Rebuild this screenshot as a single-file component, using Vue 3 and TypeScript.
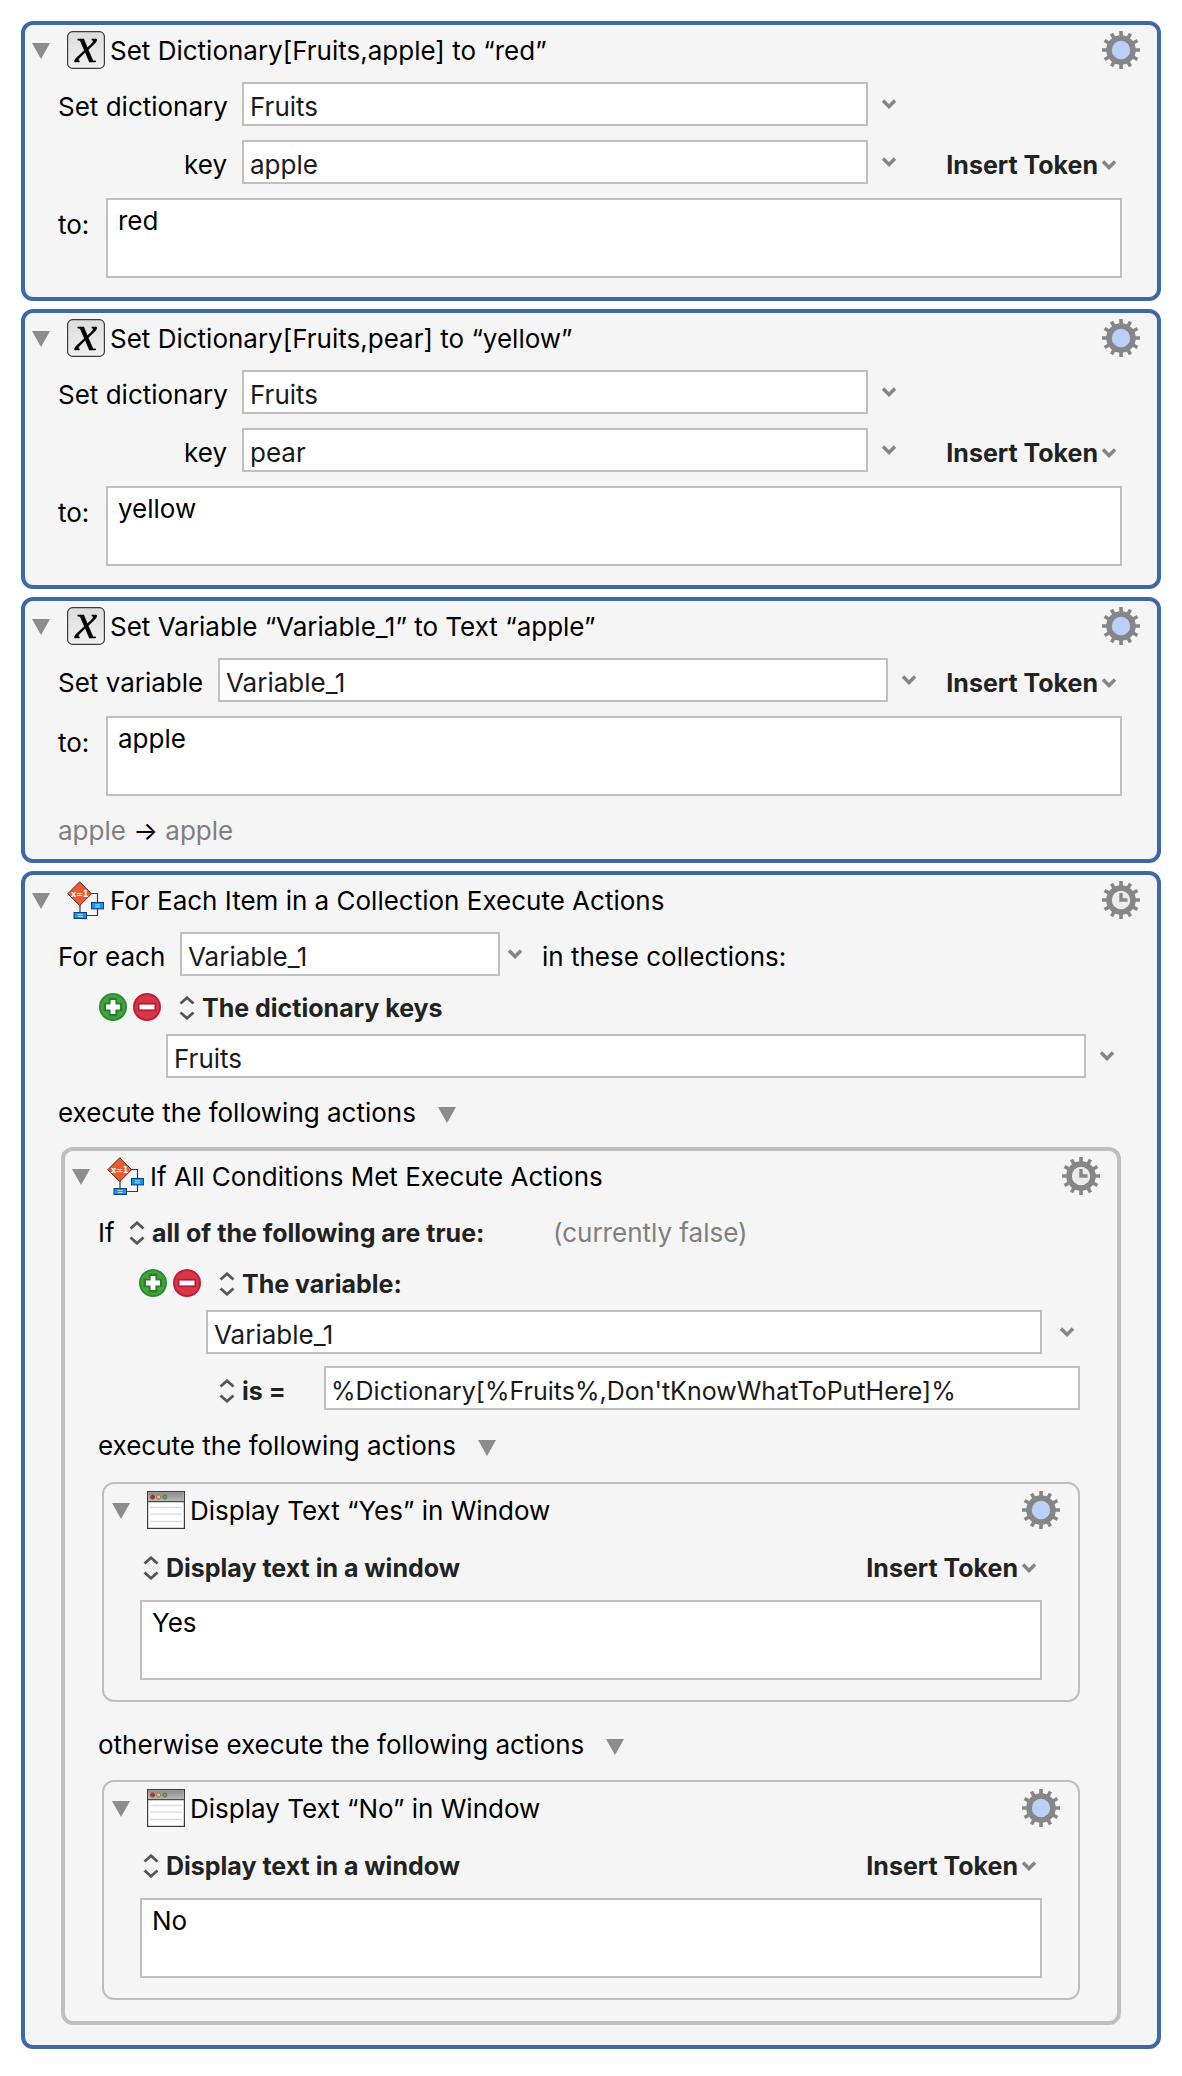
<script setup lang="ts">
import { ref } from 'vue'

interface DictionaryAction {
  id: string
  title: string
  dictionary: string
  key: string
  value: string
}

interface DisplayAction {
  id: string
  caption: string
  title: string
  text: string
}

const dictionaryActions = ref<DictionaryAction[]>([
  { id: 'dict-apple', title: 'Set Dictionary[Fruits,apple] to “red”', dictionary: 'Fruits', key: 'apple', value: 'red' },
  { id: 'dict-pear', title: 'Set Dictionary[Fruits,pear] to “yellow”', dictionary: 'Fruits', key: 'pear', value: 'yellow' },
])

const displayActions = ref<DisplayAction[]>([
  { id: 'show-yes', caption: 'execute the following actions', title: 'Display Text “Yes” in Window', text: 'Yes' },
  { id: 'show-no', caption: 'otherwise execute the following actions', title: 'Display Text “No” in Window', text: 'No' },
])

const variableName = ref('Variable_1')
const variableText = ref('apple')
const loopVariable = ref('Variable_1')
const loopDictionary = ref('Fruits')
const conditionVariable = ref('Variable_1')
const conditionValue = ref("%Dictionary[%Fruits%,Don'tKnowWhatToPutHere]%")

const gearTeeth = [0, 30, 60, 90, 120, 150]
</script>

<template>
  <svg class="sprite" aria-hidden="true">
    <defs>
      <linearGradient id="tile" x1="0" y1="0" x2="0" y2="1">
        <stop offset="0" stop-color="#dcdcdc" />
        <stop offset="1" stop-color="#f0f0f0" />
      </linearGradient>
      <linearGradient id="titlebar" x1="0" y1="0" x2="0" y2="1">
        <stop offset="0" stop-color="#8a8a8a" />
        <stop offset="1" stop-color="#b8b8b8" />
      </linearGradient>
      <symbol id="triangle" viewBox="0 0 18 16">
        <path d="M0 0H18L9 16Z" fill="#8c8c8c" />
      </symbol>
      <symbol id="chevron" viewBox="0 0 14 10">
        <path d="M1 1.5L7 7.5L13 1.5" fill="none" stroke="#868686" stroke-width="3.4" />
      </symbol>
      <symbol id="updown" viewBox="0 0 16 24">
        <path d="M1.5 7.5L8 1.8L14.5 7.5M1.5 16.5L8 22.2L14.5 16.5" fill="none" stroke="#565656" stroke-width="2.8" />
      </symbol>
      <symbol id="variable" viewBox="0 0 38 38">
        <rect x="0.6" y="0.6" width="36.8" height="36.8" rx="5" fill="url(#tile)" stroke="#3c3c3c" stroke-width="1.2" />
        <text x="19" y="31" text-anchor="middle" font-family="Liberation Serif, serif" font-style="italic" font-size="50" stroke="#000" stroke-width="0.4">x</text>
      </symbol>
      <symbol id="flow" viewBox="0 0 38 38">
        <path d="M24 12.5H30.5V22M13 24V32M30.5 27V34.5H20" fill="none" stroke="#3a3a3a" stroke-width="1.2" />
        <path d="M12.7 0.8L24.6 12.7L12.7 24.6L0.8 12.7Z" fill="#ee5a30" stroke="#5a2a1c" stroke-width="1" />
        <text x="12.7" y="15.8" text-anchor="middle" font-family="DejaVu Sans, sans-serif" font-weight="bold" font-size="8" fill="#fff">x=1</text>
        <rect x="24.5" y="21.5" width="12" height="6.4" fill="#0a95ff" stroke="#12406e" />
        <rect x="7" y="31.5" width="12.5" height="6" fill="#0a95ff" stroke="#12406e" />
        <path d="M28 23.8H33M28 25.8H33M10.7 33.6H15.7M10.7 35.5H15.7" stroke="#a9dcff" stroke-width="1" />
      </symbol>
      <symbol id="window" viewBox="0 0 38 38">
        <rect x="0.6" y="0.6" width="36.8" height="36.8" fill="#fff" stroke="#3c3c3c" stroke-width="1.2" />
        <rect x="1.2" y="1.2" width="35.6" height="9" fill="url(#titlebar)" />
        <path d="M0.6 10.6H37.4" stroke="#4a4a4a" stroke-width="1.2" />
        <circle cx="5.6" cy="6" r="2.1" fill="#cf1f2f" stroke="#7a4a4a" stroke-width="0.8" />
        <circle cx="11.7" cy="6" r="2.1" fill="#f7bd74" stroke="#86694a" stroke-width="0.8" />
        <circle cx="17.8" cy="6" r="2.1" fill="#4fb243" stroke="#4a6e46" stroke-width="0.8" />
        <path d="M3 16.5H35M3 23.2H35M3 30.5H35" stroke="#dcdcdc" stroke-width="1.3" />
      </symbol>
      <symbol id="gear" viewBox="0 0 38 38">
        <path v-for="angle in gearTeeth" :key="angle" d="M19 0V38" stroke="#868686" stroke-width="3.6" :transform="`rotate(${angle} 19 19)`" />
        <circle cx="19" cy="19" r="14.8" fill="#868686" />
      </symbol>
      <symbol id="gear-idle" viewBox="0 0 38 38">
        <use href="#gear" />
        <circle cx="19" cy="19" r="9.2" fill="#b9d0f7" />
      </symbol>
      <symbol id="gear-timed" viewBox="0 0 38 38">
        <use href="#gear" />
        <circle cx="19" cy="19" r="9.2" fill="#ececec" />
        <path d="M19 12V19H25.5" fill="none" stroke="#868686" stroke-width="3.4" />
      </symbol>
      <symbol id="plus" viewBox="0 0 28 28">
        <circle cx="14" cy="14" r="13" fill="#49a338" stroke="#2c8c33" stroke-width="2" />
        <path d="M14 4.6V23.4M4.6 14H23.4" stroke="#24812c" stroke-width="8.6" />
        <path d="M14 7V21M7 14H21" stroke="#fff" stroke-width="4.8" />
      </symbol>
      <symbol id="minus" viewBox="0 0 28 28">
        <circle cx="14" cy="14" r="13" fill="#d43a44" stroke="#c41c3e" stroke-width="2" />
        <path d="M4.8 14H23.2" stroke="#bd1738" stroke-width="8.4" />
        <path d="M6.5 14H21.5" stroke="#fff" stroke-width="4.8" />
      </symbol>
    </defs>
  </svg>

  <main class="macro">
    <section v-for="action in dictionaryActions" :key="action.id" class="card">
      <header class="head">
        <button class="icon-button" type="button" aria-label="Collapse"><svg class="triangle"><use href="#triangle" /></svg></button>
        <svg class="badge"><use href="#variable" /></svg>
        <h2 class="title">{{ action.title }}</h2>
        <button class="icon-button" type="button" aria-label="Action options"><svg class="gear"><use href="#gear-idle" /></svg></button>
      </header>
      <div class="body">
        <div class="row">
          <label class="label wide" :for="`${action.id}-name`">Set dictionary</label>
          <input :id="`${action.id}-name`" v-model="action.dictionary" class="field" type="text">
          <button class="icon-button menu" type="button" aria-label="Choose dictionary"><svg class="chevron"><use href="#chevron" /></svg></button>
          <span class="token-space far"></span>
        </div>
        <div class="row next">
          <label class="label wide" :for="`${action.id}-key`">key</label>
          <input :id="`${action.id}-key`" v-model="action.key" class="field" type="text">
          <button class="icon-button menu" type="button" aria-label="Choose key"><svg class="chevron"><use href="#chevron" /></svg></button>
          <div class="token-space far">
            <button class="token" type="button">Insert Token<svg class="chevron"><use href="#chevron" /></svg></button>
          </div>
        </div>
        <div class="value">
          <label class="to" :for="`${action.id}-value`">to:</label>
          <textarea :id="`${action.id}-value`" v-model="action.value" class="area"></textarea>
        </div>
      </div>
    </section>

    <section class="card with-result">
      <header class="head">
        <button class="icon-button" type="button" aria-label="Collapse"><svg class="triangle"><use href="#triangle" /></svg></button>
        <svg class="badge"><use href="#variable" /></svg>
        <h2 class="title">Set Variable “Variable_1” to Text “apple”</h2>
        <button class="icon-button" type="button" aria-label="Action options"><svg class="gear"><use href="#gear-idle" /></svg></button>
      </header>
      <div class="body">
        <div class="row">
          <label class="label medium" for="variable-name">Set variable</label>
          <input id="variable-name" v-model="variableName" class="field" type="text">
          <button class="icon-button menu" type="button" aria-label="Choose variable"><svg class="chevron"><use href="#chevron" /></svg></button>
          <div class="token-space">
            <button class="token" type="button">Insert Token<svg class="chevron"><use href="#chevron" /></svg></button>
          </div>
        </div>
        <div class="value">
          <label class="to" for="variable-text">to:</label>
          <textarea id="variable-text" v-model="variableText" class="area"></textarea>
        </div>
        <p class="result">apple <span class="arrow">→</span> apple</p>
      </div>
    </section>

    <section class="card outer">
      <header class="head">
        <button class="icon-button" type="button" aria-label="Collapse"><svg class="triangle"><use href="#triangle" /></svg></button>
        <svg class="badge"><use href="#flow" /></svg>
        <h2 class="title">For Each Item in a Collection Execute Actions</h2>
        <button class="icon-button" type="button" aria-label="Action options"><svg class="gear"><use href="#gear-timed" /></svg></button>
      </header>
      <div class="body">
        <div class="row">
          <label class="label short" for="loop-variable">For each</label>
          <input id="loop-variable" v-model="loopVariable" class="field small" type="text">
          <button class="icon-button menu near" type="button" aria-label="Choose variable"><svg class="chevron"><use href="#chevron" /></svg></button>
          <span class="label after">in these collections:</span>
        </div>
        <div class="clause">
          <button class="icon-button" type="button" aria-label="Add collection"><svg class="round"><use href="#plus" /></svg></button>
          <button class="icon-button" type="button" aria-label="Remove collection"><svg class="round"><use href="#minus" /></svg></button>
          <div class="popup">
            <svg class="updown"><use href="#updown" /></svg>
            <select aria-label="Collection type"><option>The dictionary keys</option></select>
          </div>
        </div>
        <div class="row indent">
          <input v-model="loopDictionary" class="field" type="text" aria-label="Dictionary">
          <button class="icon-button menu" type="button" aria-label="Choose dictionary"><svg class="chevron"><use href="#chevron" /></svg></button>
        </div>
        <div class="caption">
          execute the following actions
          <button class="icon-button" type="button" aria-label="Hide actions"><svg class="triangle"><use href="#triangle" /></svg></button>
        </div>

        <section class="card nested">
          <header class="head">
            <button class="icon-button" type="button" aria-label="Collapse"><svg class="triangle"><use href="#triangle" /></svg></button>
            <svg class="badge"><use href="#flow" /></svg>
            <h3 class="title">If All Conditions Met Execute Actions</h3>
            <button class="icon-button" type="button" aria-label="Action options"><svg class="gear"><use href="#gear-timed" /></svg></button>
          </header>
          <div class="body">
            <div class="row">
              <label class="label if" for="match-kind">If</label>
              <div class="popup low">
                <svg class="updown"><use href="#updown" /></svg>
                <select id="match-kind"><option>all of the following are true:</option></select>
              </div>
              <span class="label state">(currently false)</span>
            </div>
            <div class="clause">
              <button class="icon-button" type="button" aria-label="Add condition"><svg class="round"><use href="#plus" /></svg></button>
              <button class="icon-button" type="button" aria-label="Remove condition"><svg class="round"><use href="#minus" /></svg></button>
              <div class="popup">
                <svg class="updown"><use href="#updown" /></svg>
                <select aria-label="Condition type"><option>The variable:</option></select>
              </div>
            </div>
            <div class="row indent">
              <input v-model="conditionVariable" class="field" type="text" aria-label="Variable">
              <button class="icon-button menu roomy" type="button" aria-label="Choose variable"><svg class="chevron"><use href="#chevron" /></svg></button>
            </div>
            <div class="row compare">
              <div class="popup low operator">
                <svg class="updown"><use href="#updown" /></svg>
                <select aria-label="Comparison"><option>is =</option></select>
              </div>
              <input v-model="conditionValue" class="field expression" type="text" aria-label="Comparison value">
            </div>

            <template v-for="action in displayActions" :key="action.id">
              <div class="caption">
                {{ action.caption }}
                <button class="icon-button" type="button" aria-label="Hide actions"><svg class="triangle"><use href="#triangle" /></svg></button>
              </div>
              <section class="card thin">
                <header class="head">
                  <button class="icon-button" type="button" aria-label="Collapse"><svg class="triangle"><use href="#triangle" /></svg></button>
                  <svg class="badge"><use href="#window" /></svg>
                  <h4 class="title">{{ action.title }}</h4>
                  <button class="icon-button" type="button" aria-label="Action options"><svg class="gear"><use href="#gear-idle" /></svg></button>
                </header>
                <div class="body">
                  <div class="display">
                    <div class="popup">
                      <svg class="updown"><use href="#updown" /></svg>
                      <select aria-label="Display mode"><option>Display text in a window</option></select>
                    </div>
                    <button class="token" type="button">Insert Token<svg class="chevron"><use href="#chevron" /></svg></button>
                  </div>
                  <textarea v-model="action.text" class="area" aria-label="Text to display"></textarea>
                </div>
              </section>
            </template>
          </div>
        </section>
      </div>
    </section>
  </main>
</template>

<style>
body {
  margin: 0;
  background: #fff;
}
</style>

<style scoped>
* {
  box-sizing: border-box;
}

.sprite {
  position: absolute;
  width: 0;
  height: 0;
}

.macro {
  display: flex;
  flex-direction: column;
  gap: 8px;
  padding: 21px 21px 27px;
  color: #000;
  font: 26px/32px Inter, "Liberation Sans", sans-serif;
}

.card {
  padding-bottom: 19px;
  border: 4px solid #3d68a5;
  border-radius: 12px;
  background: #f5f5f5;
}

.with-result {
  padding-bottom: 12px;
}

.outer {
  padding-bottom: 20px;
}

.nested {
  margin: 0 1px 0 3px;
  padding-bottom: 21px;
  border-color: #bfbfbf;
}

.thin {
  margin: 0 2px 0 4px;
  padding-bottom: 20px;
  border: 2px solid #bfbfbf;
}

.head {
  display: flex;
  align-items: center;
  height: 50px;
  margin-bottom: 7px;
  padding: 0 17px 0 7px;
}

.thin > .head {
  height: 52px;
  margin-bottom: 0;
  padding: 0 18px 0 8px;
}

.title {
  flex: 1;
  margin: 0;
  padding: 1px 0 0 5px;
  font: inherit;
}

.badge {
  width: 38px;
  height: 38px;
  margin-left: 17px;
}

.icon-button {
  display: flex;
  flex: none;
  padding: 0;
  border: 0;
  background: none;
}

.triangle {
  width: 18px;
  height: 16px;
}

.head .triangle {
  margin-top: 2px;
}

.gear {
  width: 38px;
  height: 38px;
}

.round {
  width: 28px;
  height: 28px;
}

.chevron {
  flex: none;
  width: 14px;
  height: 10px;
}

.updown {
  flex: none;
  width: 16px;
  height: 24px;
}

.body {
  padding: 0 35px 0 33px;
}

.thin > .body {
  padding: 0 36px;
}

.row {
  display: flex;
  align-items: center;
  height: 44px;
}

.next {
  margin-top: 14px;
}

.label {
  flex: none;
  padding-top: 5px;
  white-space: nowrap;
}

.wide {
  width: 184px;
  padding-right: 15px;
  text-align: right;
}

.medium {
  width: 160px;
}

.short {
  width: 122px;
}

.if {
  width: 31px;
}

.after {
  padding-left: 20px;
}

.state {
  padding-left: 68px;
  color: #7f7f7f;
}

.field {
  flex: 1;
  min-width: 0;
  height: 44px;
  padding: 5px 6px 0;
  border: 2px solid #bfbfbf;
  border-radius: 0;
  outline: 0;
  background: #fff;
  color: #1a1a1a;
  font: inherit;
}

.expression {
  padding-left: 5px;
  font-size: 25px;
}

.small {
  flex: 0 0 320px;
}

.menu {
  margin-left: 14px;
}

.near {
  margin-left: 8px;
}

.roomy {
  margin-left: 18px;
}

.token-space {
  display: flex;
  flex: none;
  justify-content: flex-end;
  width: 206px;
  padding: 6px 6px 0 0;
}

.far {
  width: 226px;
}

.token {
  display: flex;
  align-items: center;
  gap: 4px;
  padding: 0;
  border: 0;
  background: none;
  color: #222;
  font: bold 25px/32px Inter, "Liberation Sans", sans-serif;
  white-space: nowrap;
}

.value {
  display: flex;
  margin-top: 14px;
}

.to {
  flex: none;
  width: 48px;
  padding-top: 11px;
}

.area {
  display: block;
  flex: 1;
  width: 100%;
  min-width: 0;
  height: 80px;
  padding: 5px 10px;
  border: 2px solid #bfbfbf;
  border-radius: 0;
  outline: 0;
  background: #fff;
  color: #000;
  font: inherit;
  resize: none;
}

.result {
  margin: 19px 0 0;
  color: #7f7f7f;
}

.arrow {
  color: #000;
}

.clause {
  display: flex;
  align-items: center;
  gap: 6px;
  height: 58px;
  padding: 3px 0 0 41px;
}

.popup {
  display: flex;
  align-items: center;
  gap: 7px;
}

.clause > .popup {
  padding: 2px 0 0 12px;
}

.low {
  padding-top: 6px;
}

.popup select {
  appearance: none;
  padding: 0;
  border: 0;
  outline: 0;
  background: none;
  color: #222;
  font: bold 25px/32px Inter, "Liberation Sans", sans-serif;
}

.indent {
  padding: 0 8px 0 108px;
}

.compare {
  margin-top: 12px;
  padding: 0 2px 0 121px;
}

.operator {
  width: 105px;
}

.caption {
  display: flex;
  align-items: center;
  gap: 22px;
  height: 69px;
}

.caption .triangle {
  margin-top: 4px;
}

.compare + .caption {
  height: 72px;
}

.thin + .caption {
  height: 78px;
  padding-top: 7px;
}

.display {
  display: flex;
  align-items: center;
  justify-content: space-between;
  height: 64px;
  padding: 0 6px 0 3px;
}
</style>
